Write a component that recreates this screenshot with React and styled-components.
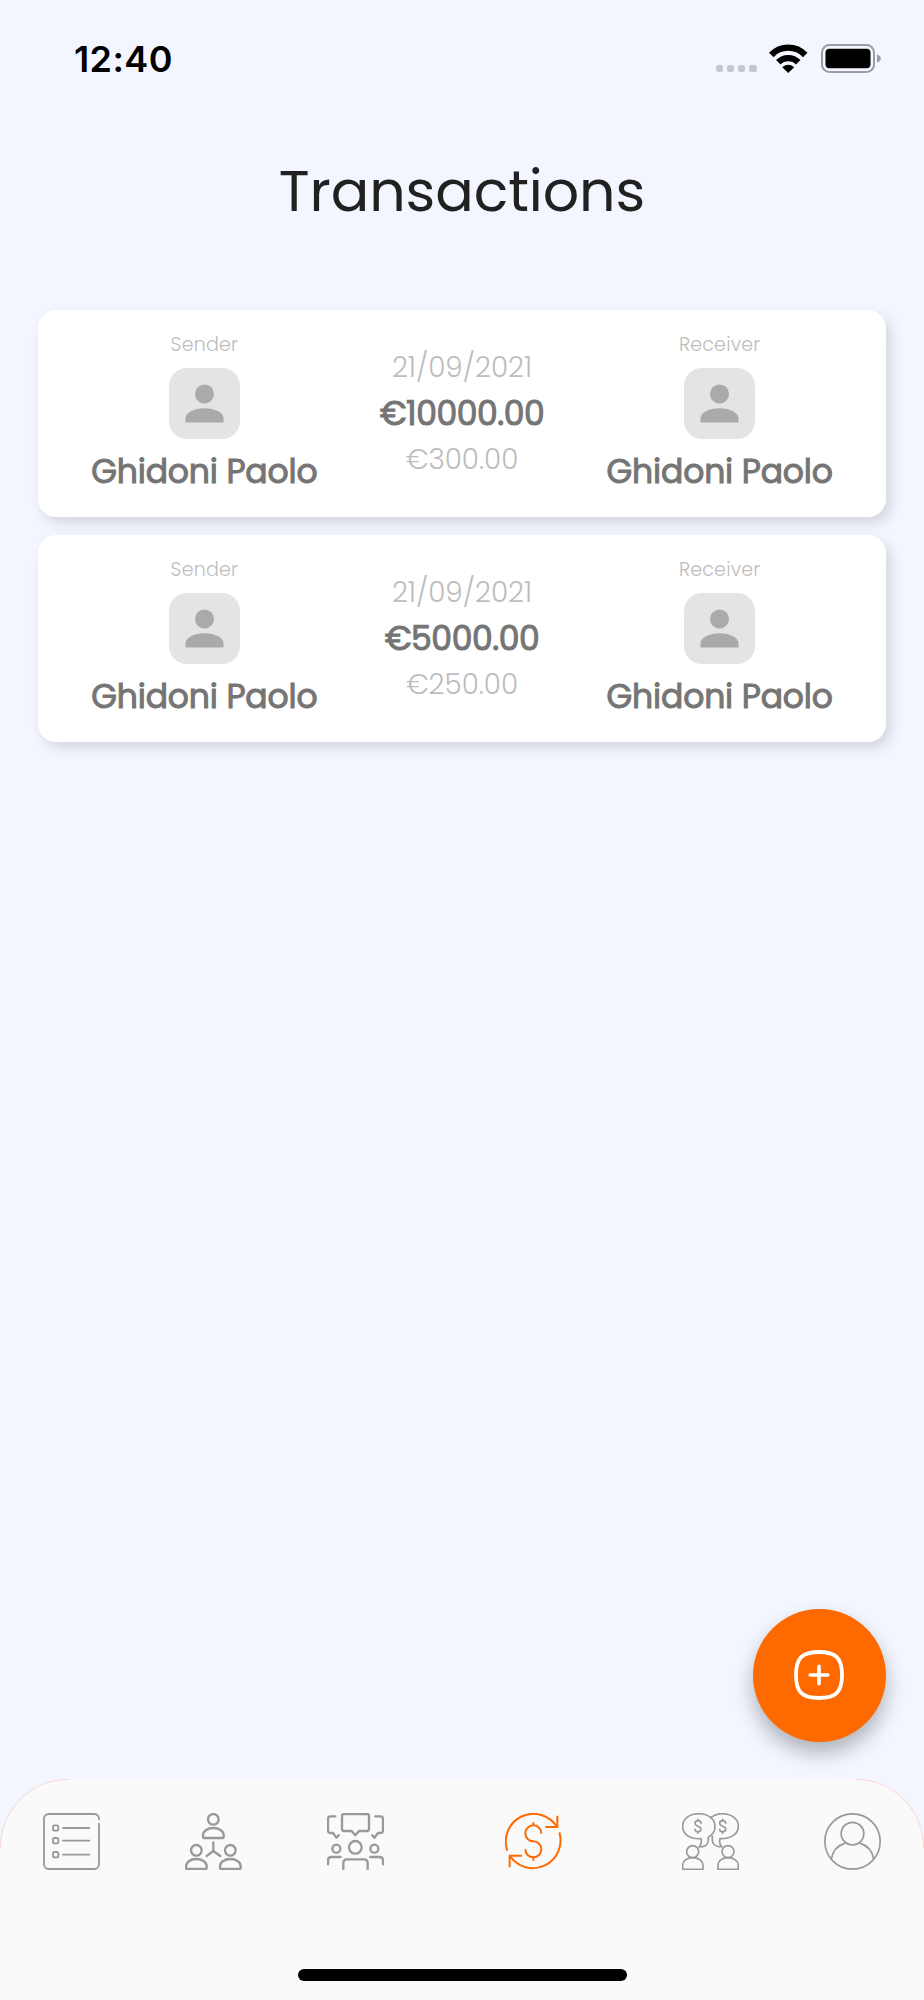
import styled, { createGlobalStyle } from 'styled-components';

const GlobalStyle = createGlobalStyle`
  * { box-sizing : border-box; }
  body {
    margin : 0;
    background : #f3f6ff;
  }
`
const Screen = styled.div`
  display : flex;
  flex-direction : column;
  width : 924px;
  height : 2000px;
  overflow : hidden;
  background : #f3f6ff;
  font-family : Poppins, Inter, "Liberation Sans", sans-serif;
`
const StatusBar = styled.header`
  display : flex;
  justify-content : space-between;
  align-items : center;
  height : 117px;
  padding : 0 43.5px 0 74px;
`
const Time = styled.span`
  font-family : Inter, "Liberation Sans", sans-serif;
  font-size : 36px;
  font-weight : 600;
  line-height : 44px;
  letter-spacing : 0.4px;
  color : #000;
`
const StatusIcons = styled.div`
  display : flex;
  align-items : center;
  gap : 12.7px;
`
const Dots = styled.div`
  display : flex;
  gap : 3.7px;
  padding-top : 20px;
  span {
    width : 7.5px;
    height : 7.5px;
    border-radius : 2.5px;
    background : #c5c7d0;
  }
`
const Title = styled.h1`
  margin : 34px 0 0;
  font-size : 57px;
  font-weight : 400;
  line-height : 80px;
  letter-spacing : -0.1px;
  text-align : center;
  color : #212121;
`
const List = styled.main`
  display : flex;
  flex-direction : column;
  gap : 18.5px;
  flex : 1;
  padding : 79px 38px 0;
`
const Card = styled.article`
  display : grid;
  grid-template-columns : repeat(3, 1fr);
  height : 206.5px;
  padding : 0 37.5px;
  border-radius : 18px;
  background : #fff;
  box-shadow : 5px 6px 13px rgba(0, 0, 0, 0.13);
`
const Column = styled.div`
  display : flex;
  flex-direction : column;
  align-items : center;
  padding-top : ${props => props.$top}px;
  white-space : nowrap;
`
const Role = styled.span`
  font-size : 19px;
  font-weight : 300;
  line-height : 29px;
  letter-spacing : 0.2px;
  color : #bdbdbd;
`
const Avatar = styled.div`
  display : flex;
  justify-content : center;
  align-items : center;
  width : 71px;
  height : 71px;
  margin : 9px 0 10px;
  border-radius : 18px;
  background : #e4e4e4;
`
const Strong = styled.span`
  font-size : 33px;
  font-weight : 400;
  line-height : 46px;
  letter-spacing : ${props => props.$spacing}px;
  -webkit-text-stroke : 1px #757575;
  color : #757575;
`
const Light = styled.span`
  font-size : 27.8px;
  font-weight : 300;
  line-height : 46px;
  color : #bdbdbd;
`
const FabRow = styled.div`
  display : flex;
  justify-content : flex-end;
  padding : 0 38px 37px;
`
const Fab = styled.button`
  display : flex;
  justify-content : center;
  align-items : center;
  width : 133px;
  height : 133px;
  padding : 0 1px 1px 0;
  border : 0;
  border-radius : 50%;
  background : #ff6a00;
  box-shadow : 0 11px 20px rgba(0, 0, 0, 0.28);
`
const NavBar = styled.footer`
  position : relative;
  display : flex;
  flex-direction : column;
  justify-content : space-between;
  align-items : center;
  height : 221px;
  padding-bottom : 19px;
  border-radius : 68px 68px 0 0;
  background : #fafafa;

  &::before, &::after {
    content : '';
    position : absolute;
    top : 0;
    width : 68px;
    height : 68px;
    border : 0 solid rgba(255, 110, 110, 0.25);
  }
  &::before {
    left : 0;
    border-width : 1px 0 0 1px;
    border-top-left-radius : 68px;
  }
  &::after {
    right : 0;
    border-width : 1px 1px 0 0;
    border-top-right-radius : 68px;
  }
`
const Tabs = styled.nav`
  display : grid;
  grid-template-columns : 2fr 2fr 2fr 3fr 2fr 2fr;
  width : 100%;
  padding-top : 33.5px;
`
const Tab = styled.a`
  display : flex;
  justify-content : center;
  color : ${props => props.$active ? '#ff6a00' : '#999'};
  svg {
    width : 57px;
    height : 57px;
    fill : none;
    stroke : currentColor;
    stroke-width : ${props => props.$stroke}px;
    stroke-linecap : ${props => props.$active ? 'butt' : 'round'};
    stroke-linejoin : ${props => props.$active ? 'miter' : 'round'};
  }
`
const HomeIndicator = styled.div`
  width : 329px;
  height : 12px;
  border-radius : 6px;
  background : #000;
`

const transactions = [
  { id: 1, sender: 'Ghidoni Paolo', receiver: 'Ghidoni Paolo', date: '21/09/2021', amount: 10000, fee: 300 },
  { id: 2, sender: 'Ghidoni Paolo', receiver: 'Ghidoni Paolo', date: '21/09/2021', amount: 5000, fee: 250 },
];

function WifiIcon(){
  return (
    <svg width="38.5" height="29" viewBox="0 0 116 87" fill="none" stroke="#000" strokeWidth="19">
      <path d="M7 33A70 70 0 0 1 109 33" />
      <path d="M28 55A42 42 0 0 1 88 55" />
      <path d="M58 87L40 70Q58 55 76 70Z" fill="#000" stroke="none" />
    </svg>
  )
}

function BatteryIcon(){
  return (
    <svg width="60" height="29" viewBox="0 0 60 29">
      <rect x="1" y="1" width="52" height="27" rx="7.5" fill="none" stroke="#9b9da5" strokeWidth="2" />
      <rect x="4.5" y="4.8" width="45" height="19.4" rx="4" fill="#000" />
      <path d="M56 10.5Q59.8 12 59.8 14.5T56 18.5Z" fill="#9b9da5" />
    </svg>
  )
}

function PersonIcon(){
  return (
    <svg width="57" height="57" viewBox="0 0 24 24" fill="#aaa">
      <circle cx="12" cy="8" r="4" />
      <path d="M4 20V18.2C4 15.9 7.6 14 12 14S20 15.9 20 18.2V20Z" />
    </svg>
  )
}

function AddIcon(){
  return (
    <svg width="50" height="50" viewBox="0 0 50 50" fill="none" stroke="#fff" strokeLinecap="round">
      <path d="M25 2C42 2 48 8 48 25S42 48 25 48 2 42 2 25 8 2 25 2Z" strokeWidth="3.8" />
      <path d="M25 16.2V33.8M16.2 25H33.8" strokeWidth="3.6" />
    </svg>
  )
}

function ListIcon(){
  return (
    <svg viewBox="0 0 171 171">
      <path d="M168 19V17A14 14 0 0 0 154 3H17A14 14 0 0 0 3 17V154A14 14 0 0 0 17 168H154A14 14 0 0 0 168 154V32" />
      {[45, 83, 125].map(y => (
        <g key={y}>
          <rect x="30" y={y - 8} width="16" height="16" rx="5" />
          <path d={`M60 ${y}H139`} />
        </g>
      ))}
    </svg>
  )
}

function TeamIcon(){
  const people = [[85, 19], [34, 112], [136, 112]];
  return (
    <svg viewBox="0 0 171 171">
      {people.map(([x, y]) => (
        <g key={x}>
          <circle cx={x} cy={y} r="16" />
          <path d={`M${x - 28} ${y + 56}Q${x - 31} ${y + 56} ${x - 31} ${y + 52}C${x - 33} ${y + 35} ${x - 17} ${y + 26} ${x} ${y + 26}S${x + 33} ${y + 35} ${x + 31} ${y + 52}Q${x + 31} ${y + 56} ${x + 28} ${y + 56}Z`} />
        </g>
      ))}
      <path d="M85 88V114L65 129M85 114L106 129" />
    </svg>
  )
}

function MeetingIcon(){
  return (
    <svg viewBox="0 0 171 171">
      <path d="M51 3H120Q126 3 126 9V48Q126 54 120 54H96L85 67 74 54H51Q45 54 45 48V9Q45 3 51 3Z" />
      <path d="M25 10H10Q3 10 3 17V53Q3 60 10 60H18L28 74 35 67M145 10H160Q168 10 168 17V53Q168 60 160 60H153L142 74 136 67" />
      <circle cx="85" cy="103" r="19" />
      <circle cx="28" cy="107" r="12" />
      <circle cx="142" cy="107" r="12" />
      <path d="M49 169V150Q49 139 60 139H111Q122 139 122 150V169" />
      <path d="M3 154V143Q3 132 14 132H41M130 132H157Q168 132 168 143V154" />
    </svg>
  )
}

function ExchangeIcon(){
  return (
    <svg viewBox="0 0 171 171">
      <path d="M7 113A83 83 0 0 1 156 42M163 58A83 83 0 0 1 15 129" />
      <path d="M157 8V42H121M14 163V128H51" />
      <path d="M109 62A24 24 0 1 0 85 85A24 24 0 1 1 61 109M85 28V38M85 133V143" />
    </svg>
  )
}

function NegotiationIcon(){
  return (
    <svg viewBox="0 0 171 171">
      <path d="M57 77C22 79 2 63 2 40S23 2 50 2 99 17 99 40C99 55 91 67 79 72V80C79 94 68 102 51 102Q61 93 57 77Z" />
      <path d="M87 13C97 6 107 2 120 2C148 2 169 17 169 40C169 62 148 78 114 77Q110 93 120 102C103 102 91 94 91 80V70" />
      {[48, 122].map(x => (
        <path key={x} d={`M${x + 9} 31C${x + 9} 20 ${x - 9} 20 ${x - 9} 31C${x - 9} 42 ${x + 9} 37 ${x + 9} 48C${x + 9} 59 ${x - 9} 59 ${x - 9} 49M${x} 19V24M${x} 56V61`} />
      ))}
      {[32, 138].map(x => (
        <g key={x}>
          <circle cx={x} cy="116" r="18" />
          <path d={`M${x - 30} 169V158C${x - 30} 142 ${x - 15} 134 ${x} 134S${x + 31} 142 ${x + 31} 158V169Z`} />
        </g>
      ))}
    </svg>
  )
}

function ProfileIcon(){
  return (
    <svg viewBox="0 0 171 171">
      <circle cx="85.5" cy="85.5" r="83" />
      <circle cx="85.5" cy="62" r="34" />
      <path d="M22 138C26 114 42 97 62 91M109 91C129 97 145 114 149 138" />
    </svg>
  )
}

const tabs = [
  { name: 'list', icon: ListIcon, stroke: 5.5 },
  { name: 'team', icon: TeamIcon, stroke: 7 },
  { name: 'meeting', icon: MeetingIcon, stroke: 7 },
  { name: 'transactions', icon: ExchangeIcon, stroke: 6, active: true },
  { name: 'negotiation', icon: NegotiationIcon, stroke: 5 },
  { name: 'profile', icon: ProfileIcon, stroke: 5 },
];

function Person(props){
  return (
    <Column $top={19.5}>
      <Role>{props.role}</Role>
      <Avatar><PersonIcon /></Avatar>
      <Strong $spacing={-0.15}>{props.name}</Strong>
    </Column>
  )
}

function TransactionCard(props){
  const { sender, receiver, date, amount, fee } = props.item;
  return (
    <Card>
      <Person role='Sender' name={sender} />
      <Column $top={34.5}>
        <Light>{date}</Light>
        <Strong $spacing={-0.45}>{'€' + amount.toFixed(2)}</Strong>
        <Light>{'€' + fee.toFixed(2)}</Light>
      </Column>
      <Person role='Receiver' name={receiver} />
    </Card>
  )
}

function App(){
  return (
    <Screen>
      <GlobalStyle />
      <StatusBar>
        <Time>12:40</Time>
        <StatusIcons>
          <Dots><span /><span /><span /><span /></Dots>
          <WifiIcon />
          <BatteryIcon />
        </StatusIcons>
      </StatusBar>
      <Title>Transactions</Title>
      <List>
        {transactions.map(item => <TransactionCard key={item.id} item={item} />)}
      </List>
      <FabRow>
        <Fab aria-label='add'><AddIcon /></Fab>
      </FabRow>
      <NavBar>
        <Tabs>
          {tabs.map(({ name, icon: Icon, stroke, active }) => (
            <Tab key={name} $active={active} $stroke={stroke}><Icon /></Tab>
          ))}
        </Tabs>
        <HomeIndicator />
      </NavBar>
    </Screen>
  )
}

export default App;
